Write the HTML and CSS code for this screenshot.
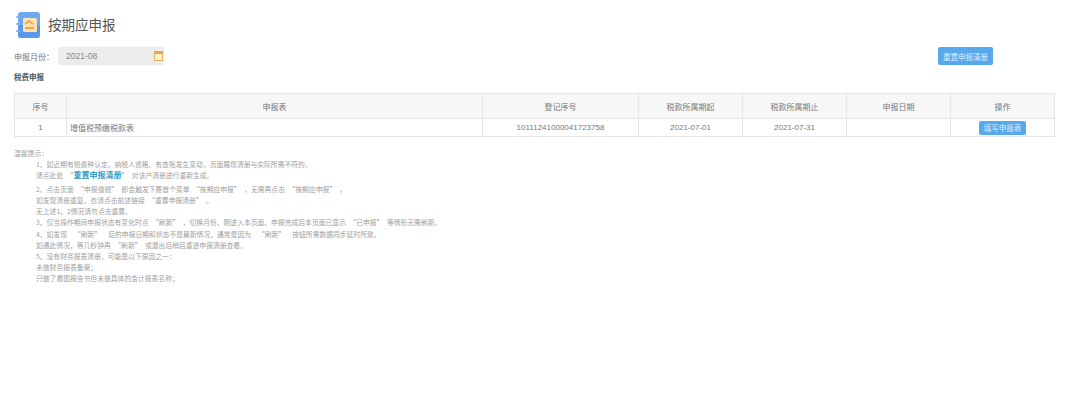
FILE: index.html
```html
<!DOCTYPE html>
<html lang="zh-CN">
<head>
    <meta charset="UTF-8">
    <title>按期应申报</title>
    <link rel="stylesheet" href="styles.css">
</head>
<body>
    <div class="title-bar">
        <svg class="title-icon" width="26" height="28" viewBox="0 0 26 28">
            <rect x="3" y="1" width="22" height="26" rx="3" fill="#6fa8f2"/>
            <rect x="3" y="14" width="22" height="13" rx="3" fill="#5b97ee"/>
            <rect x="1" y="5" width="4" height="2" rx="1" fill="#7fb4f4"/>
            <rect x="1" y="12" width="4" height="2" rx="1" fill="#7fb4f4"/>
            <rect x="1" y="19" width="4" height="2" rx="1" fill="#7fb4f4"/>
            <rect x="8" y="7" width="14" height="14" rx="1.5" fill="#fbe3b4"/>
            <path d="M10 13l4-3 4 3" fill="none" stroke="#f2a33a" stroke-width="1.6"/>
            <rect x="10" y="16" width="9" height="2" fill="#f2a33a"/>
        </svg>
        <h1>按期应申报</h1>
    </div>

    <div class="filter-row">
        <label class="filter-label">申报月份：</label>
        <div class="month-input">
            <span>2021-08</span>
            <svg width="9" height="10" viewBox="0 0 9 10">
                <rect x="0.5" y="0.5" width="8" height="9" fill="#fdf0cf" stroke="#e5b45e"/>
                <rect x="0.5" y="0.5" width="8" height="2.5" fill="#e5a94a"/>
            </svg>
        </div>
        <button class="btn btn-reset">重置申报清册</button>
    </div>

    <h2 class="section-title">税费申报</h2>

    <table class="report-table">
        <colgroup>
            <col class="col-no">
            <col class="col-name">
            <col class="col-code">
            <col class="col-date">
            <col class="col-date">
            <col class="col-date">
            <col>
        </colgroup>
        <thead>
            <tr>
                <th>序号</th>
                <th>申报表</th>
                <th>登记序号</th>
                <th>税款所属期起</th>
                <th>税款所属期止</th>
                <th>申报日期</th>
                <th>操作</th>
            </tr>
        </thead>
        <tbody>
            <tr>
                <td>1</td>
                <td class="left">增值税预缴税款表</td>
                <td>10111241000041723758</td>
                <td>2021-07-01</td>
                <td>2021-07-31</td>
                <td></td>
                <td><button class="btn btn-fill">填写申报表</button></td>
            </tr>
        </tbody>
    </table>

    <div class="notes">
        <p class="notes-head">温馨提示：</p>
        <div class="notes-body">
            <p>1、如近期有税费种认定、纳税人资格、有查账发生变动，页面展现清册与实际所需不符的，</p>
            <p>请点此处 “<a class="link">重置申报清册</a>” 对该户清册进行重新生成。</p>
            <p class="group-start">2、点击页面 “申报缴税” 即会触发下履首个菜单 “按期应申报” ，无需再点击 “按期应申报” ，</p>
            <p>如发现清册重复，也请点击前述链接 “重置申报清册” 。</p>
            <p>无上述1、2情况请勿点击重置。</p>
            <p>3、仅当操作期间申报状态有变化时点 “刷新” ，切换月份、刚进入本页面、申报完成后本页面已显示 “已申报” 等情形无需刷新。</p>
            <p>4、如发现 &nbsp;“刷新” &nbsp;后的申报日期和状态不是最新情况，通常是因为 &nbsp;“刷新” &nbsp;按钮所需数据同步延时所致，</p>
            <p>如遇此情况，等几秒钟再 “刷新” 或退出后稍后重进申报清册查看。</p>
            <p>5、没有财务报表清册，可能是以下原因之一：</p>
            <p>未做财务报表备案；</p>
            <p>只做了看图报告书但未做具体的会计报表名称；</p>
        </div>
    </div>
</body>
</html>
```

FILE: styles.css
```css
* {
    box-sizing: border-box;
    margin: 0;
    padding: 0;
}
body {
    font-family: "Liberation Sans", "Noto Sans CJK SC", sans-serif;
    background-color: #fff;
    color: #666;
    padding: 10px 25px 0 14px;
    overflow: hidden;
}
.title-bar {
    display: flex;
    align-items: center;
    height: 30px;
    padding-left: 1px;
}
.title-icon {
    margin-right: 7px;
}
h1 {
    font-size: 13.5px;
    font-weight: normal;
    color: #555;
    margin-top: -2px;
}
.filter-row {
    display: flex;
    align-items: center;
    height: 20px;
    margin-top: 6px;
}
.filter-label {
    font-size: 8px;
    width: 44px;
    color: #777;
}
.month-input {
    display: flex;
    align-items: center;
    justify-content: space-between;
    width: 106px;
    height: 18px;
    padding: 0 1px 0 8px;
    background-color: #ececec;
    border-radius: 2px;
    font-size: 8.5px;
    color: #888;
}
.btn {
    border: none;
    border-radius: 2px;
    background-color: #58a9ec;
    color: #d8edfc;
    font-family: inherit;
}
.btn-reset {
    width: 55px;
    height: 18px;
    margin-left: auto;
    margin-right: 62px;
    font-size: 7.5px;
}
.section-title {
    font-size: 7.5px;
    font-weight: bold;
    color: #555;
    margin-top: 6px;
    line-height: 12px;
}
.report-table {
    width: 1041px;
    margin-top: 9px;
    border-collapse: collapse;
    table-layout: fixed;
    font-size: 8px;
    color: #777;
}
.col-no {
    width: 52px;
}
.col-name {
    width: 416px;
}
.col-code {
    width: 156px;
}
.col-date {
    width: 104px;
}
.report-table th {
    height: 25px;
    background-color: #f7f7f7;
    border: 1px solid #e6e6e6;
    font-weight: normal;
    text-align: center;
}
.report-table td {
    height: 18px;
    border: 1px solid #e6e6e6;
    text-align: center;
}
.report-table td.left {
    text-align: left;
    padding-left: 3px;
}
.btn-fill {
    display: block;
    width: 47px;
    height: 14px;
    margin: 0 auto;
    font-size: 7.5px;
}
.notes {
    margin-top: 11px;
    font-family: "Noto Sans CJK SC", sans-serif;
    font-size: 6.8px;
    color: #a0a0a0;
    word-spacing: 2px;
}
.notes-head {
    line-height: 11px;
}
.notes-body {
    padding-left: 22px;
}
.notes-body p {
    height: 11.2px;
    line-height: 11.2px;
    white-space: nowrap;
}
.notes-body .group-start {
    margin-top: 2.5px;
}
.link {
    color: #35a0c4;
    font-weight: bold;
    font-size: 8px;
    line-height: 1;
}
```
